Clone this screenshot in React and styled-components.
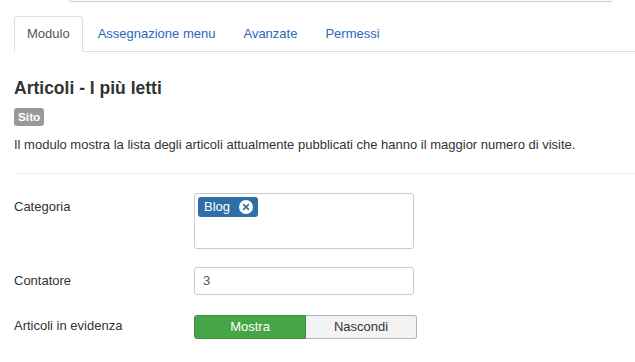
import React from "react";
import styled, { createGlobalStyle } from "styled-components";

const Global = createGlobalStyle`
  html, body { margin: 0; padding: 0; background: #fff; }
  body {
    font-family: "Liberation Sans", Arial, sans-serif;
    font-size: 13px;
    line-height: 18px;
    color: #333;
    overflow: hidden;
  }
  * { box-sizing: border-box; }
`;

const Page = styled.div`
  width: 635px;
  height: 362px;
  overflow: hidden;
  padding-left: 14px;
`;

const TitleInput = styled.div`
  margin-left: 55px;
  width: 543px;
  height: 2px;
  border: 1px solid #ccc;
  border-top: 0;
  border-radius: 0 0 3px 3px;
  background: #fff;
`;

const Tabs = styled.ul`
  list-style: none;
  margin: 14px 0 0;
  padding: 0;
  display: flex;
  border-bottom: 1px solid #ddd;
  margin-right: -2px;
`;

const Tab = styled.li`
  margin-bottom: -1px;
  margin-right: 2px;
`;

const TabLink = styled.a`
  display: block;
  padding: 8px 12px;
  line-height: 18px;
  border: 1px solid ${(p) => (p.$active ? "#ddd" : "transparent")};
  border-bottom-color: transparent;
  border-radius: 4px 4px 0 0;
  background: ${(p) => (p.$active ? "#fff" : "transparent")};
  color: ${(p) => (p.$active ? "#555" : "#2a69b8")};
  text-decoration: none;
`;

const Content = styled.div`
  padding-top: 26px;
`;

const Title = styled.h2`
  margin: 0;
  font-size: 17.5px;
  line-height: 21px;
  font-weight: bold;
  color: #333;
`;

const Badge = styled.span`
  display: inline-block;
  margin-top: 9px;
  padding: 2px 4px;
  font-size: 11.8px;
  line-height: 14px;
  font-weight: bold;
  color: #fff;
  background: #999;
  border-radius: 3px;
`;

const Description = styled.p`
  margin: 10px 0 0;
`;

const Rule = styled.hr`
  margin: 19px 0 19px;
  border: 0;
  border-top: 1px solid #eee;
`;

const Row = styled.div`
  display: flex;
  margin-bottom: 18px;
`;

const Label = styled.label`
  width: 180px;
  flex: none;
  padding-top: ${(p) => p.$pt ?? 5}px;
  color: #333;
`;

const ChoiceBox = styled.div`
  width: 220px;
  height: 56px;
  border: 1px solid #ccc;
  border-radius: 3px;
  padding: 3px;
  background: #fff;
`;

const Choice = styled.span`
  display: inline-flex;
  align-items: center;
  gap: 9px;
  height: 20px;
  padding: 0 5px 0 6px;
  background: #2f6ea7;
  border-radius: 3px;
  color: #fff;
  font-size: 13px;
  line-height: 20px;
`;

const CloseIcon = styled.svg`
  width: 14px;
  height: 14px;
  display: block;
`;

const TextInput = styled.div`
  width: 220px;
  height: 28px;
  border: 1px solid #ccc;
  border-radius: 3px;
  padding: 4px 8px;
  line-height: 18px;
  color: #555;
`;

const BtnGroup = styled.div`
  display: flex;
  margin-top: 2px;
`;

const ToggleBtn = styled.span`
  width: ${(p) => p.$w}px;
  height: 24px;
  text-align: center;
  line-height: 22px;
  border: 1px solid ${(p) => (p.$on ? "#3d8f3d" : "#b3b3b3")};
  border-left-width: ${(p) => (p.$first ? 1 : 0)}px;
  border-radius: ${(p) => (p.$first ? "3px 0 0 3px" : "0 3px 3px 0")};
  background: ${(p) => (p.$on ? "#46a546" : "#f3f3f3")};
  color: ${(p) => (p.$on ? "#fff" : "#333")};
`;

export default function App() {
  return (
    <>
      <Global />
      <Page>
        <TitleInput />
        <Tabs>
          <Tab><TabLink $active>Modulo</TabLink></Tab>
          <Tab><TabLink>Assegnazione menu</TabLink></Tab>
          <Tab><TabLink>Avanzate</TabLink></Tab>
          <Tab><TabLink>Permessi</TabLink></Tab>
        </Tabs>
        <Content>
          <Title>Articoli - I più letti</Title>
          <Badge>Sito</Badge>
          <Description>
            Il modulo mostra la lista degli articoli attualmente pubblicati che hanno il maggior numero di visite.
          </Description>
          <Rule />
          <Row>
            <Label>Categoria</Label>
            <ChoiceBox>
              <Choice>
                Blog
                <CloseIcon viewBox="0 0 14 14">
                  <circle cx="7" cy="7" r="7" fill="#fff" />
                  <path d="M4.6 4.6 L9.4 9.4 M9.4 4.6 L4.6 9.4" stroke="#2f6ea7" strokeWidth="1.6" strokeLinecap="round" />
                </CloseIcon>
              </Choice>
            </ChoiceBox>
          </Row>
          <Row>
            <Label>Contatore</Label>
            <TextInput>3</TextInput>
          </Row>
          <Row>
            <Label $pt={4}>Articoli in evidenza</Label>
            <BtnGroup>
              <ToggleBtn $on $first $w={112}>Mostra</ToggleBtn>
              <ToggleBtn $w={111}>Nascondi</ToggleBtn>
            </BtnGroup>
          </Row>
        </Content>
      </Page>
    </>
  );
}
